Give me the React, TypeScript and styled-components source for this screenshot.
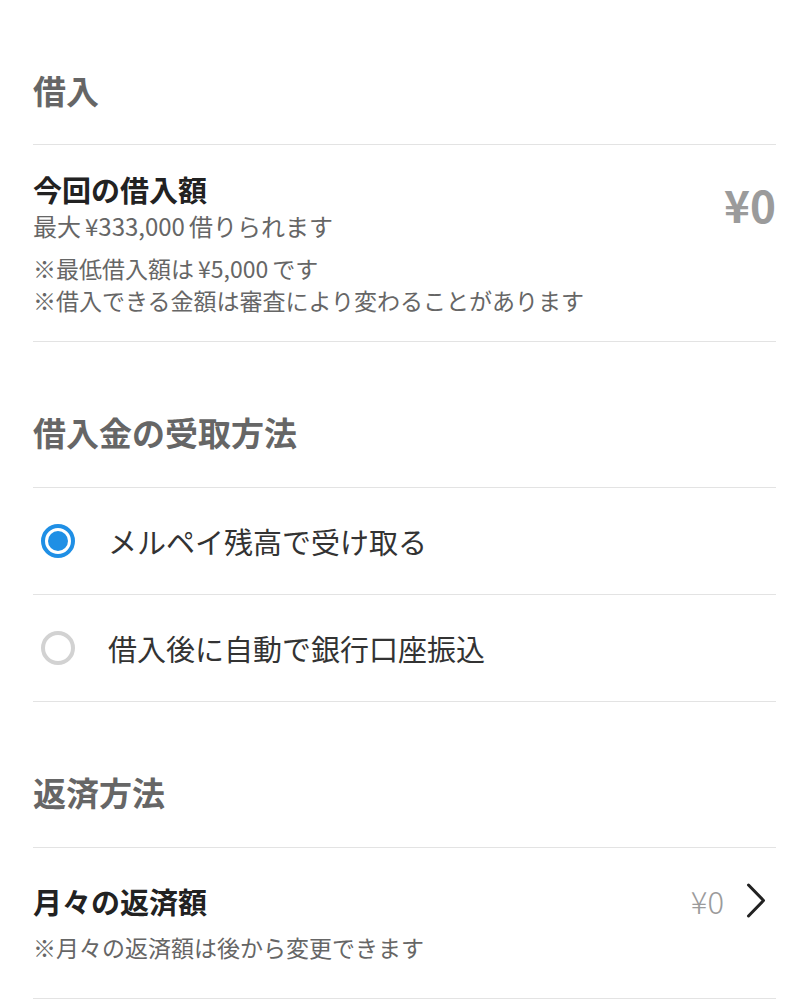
import { useState } from "react";
import styled, { createGlobalStyle } from "styled-components";

const GlobalStyle = createGlobalStyle`
  body {
    margin: 0;
    background: #fff;
    font-family: "Noto Sans CJK JP", "Noto Sans", sans-serif;
    -webkit-font-smoothing: antialiased;
  }
`;

const Page = styled.div`
  padding: 0 33px;
  background: #fff;
`;

const SectionHeader = styled.h2`
  margin: 0;
  padding: 67px 0 32px;
  font-size: 33px;
  line-height: 46px;
  font-weight: 700;
  color: #666;
  border-bottom: 1px solid #e3e3e3;
  &:first-child {
    padding-bottom: 31px;
  }
`;

const AmountRow = styled.div`
  display: flex;
  justify-content: space-between;
  align-items: flex-start;
  padding: 27px 0 25px;
  border-bottom: 1px solid #e3e3e3;
`;

const Title = styled.div`
  font-size: 29px;
  line-height: 34px;
  font-weight: 700;
  color: #222;
`;

const Subtitle = styled.div`
  margin-top: 5px;
  font-size: 24px;
  line-height: 30px;
  color: #666;
`;

const Notes = styled.div<{ $gap: number }>`
  margin-top: ${(p) => p.$gap}px;
  font-size: 23px;
  line-height: 32px;
  color: #666;
`;

const Latin = styled.span`
  margin: 0 4px;
`;

const BigAmount = styled.div`
  margin-top: 11px;
  font-size: 44px;
  line-height: 42px;
  font-weight: 700;
  color: #9b9b9b;
`;

const RadioRow = styled.label`
  display: flex;
  align-items: center;
  gap: 33px;
  height: 106px;
  padding-left: 8px;
  border-bottom: 1px solid #e3e3e3;
  cursor: pointer;
`;

const RadioMark = styled.span<{ $checked: boolean }>`
  position: relative;
  flex: none;
  box-sizing: border-box;
  width: 34px;
  height: 34px;
  border-radius: 50%;
  border: 4px solid ${(p) => (p.$checked ? "#1f8fe5" : "#d2d2d2")};
  &::after {
    content: "";
    display: ${(p) => (p.$checked ? "block" : "none")};
    position: absolute;
    top: 3px;
    left: 3px;
    width: 20px;
    height: 20px;
    border-radius: 50%;
    background: #1f8fe5;
  }
`;

const RadioText = styled.span`
  font-size: 29px;
  line-height: 40px;
  color: #333;
`;

const RepayRow = styled.div`
  padding: 35px 0 35px;
  border-bottom: 1px solid #e3e3e3;
`;

const RepayHead = styled.div`
  display: flex;
  justify-content: space-between;
  align-items: center;
`;

const RepayValue = styled.div`
  display: flex;
  align-items: center;
  gap: 22px;
  padding-right: 10px;
`;

const SmallAmount = styled.span`
  font-size: 31px;
  line-height: 34px;
  font-weight: 300;
  color: #9b9b9b;
`;

const Chevron = () => (
  <svg width="20" height="35" viewBox="0 0 20 35" fill="none">
    <path
      d="M2.5 2 L17.5 17.5 L2.5 33"
      stroke="#222"
      strokeWidth="3"
      strokeLinecap="round"
      strokeLinejoin="round"
    />
  </svg>
);

const methods = ["メルペイ残高で受け取る", "借入後に自動で銀行口座振込"];

export default function App() {
  const [method, setMethod] = useState(0);

  return (
    <Page>
      <GlobalStyle />
      <SectionHeader>借入</SectionHeader>
      <AmountRow>
        <div>
          <Title>今回の借入額</Title>
          <Subtitle>
            最大<Latin>¥333,000</Latin>借りられます
          </Subtitle>
          <Notes $gap={11}>
            ※最低借入額は<Latin>¥5,000</Latin>です
            <br />
            ※借入できる金額は審査により変わることがあります
          </Notes>
        </div>
        <BigAmount>¥0</BigAmount>
      </AmountRow>

      <SectionHeader>借入金の受取方法</SectionHeader>
      {methods.map((m, i) => (
        <RadioRow key={m} onClick={() => setMethod(i)}>
          <RadioMark $checked={method === i} />
          <RadioText>{m}</RadioText>
        </RadioRow>
      ))}

      <SectionHeader>返済方法</SectionHeader>
      <RepayRow>
        <RepayHead>
          <Title>月々の返済額</Title>
          <RepayValue>
            <SmallAmount>¥0</SmallAmount>
            <Chevron />
          </RepayValue>
        </RepayHead>
        <Notes $gap={13}>※月々の返済額は後から変更できます</Notes>
      </RepayRow>
    </Page>
  );
}
